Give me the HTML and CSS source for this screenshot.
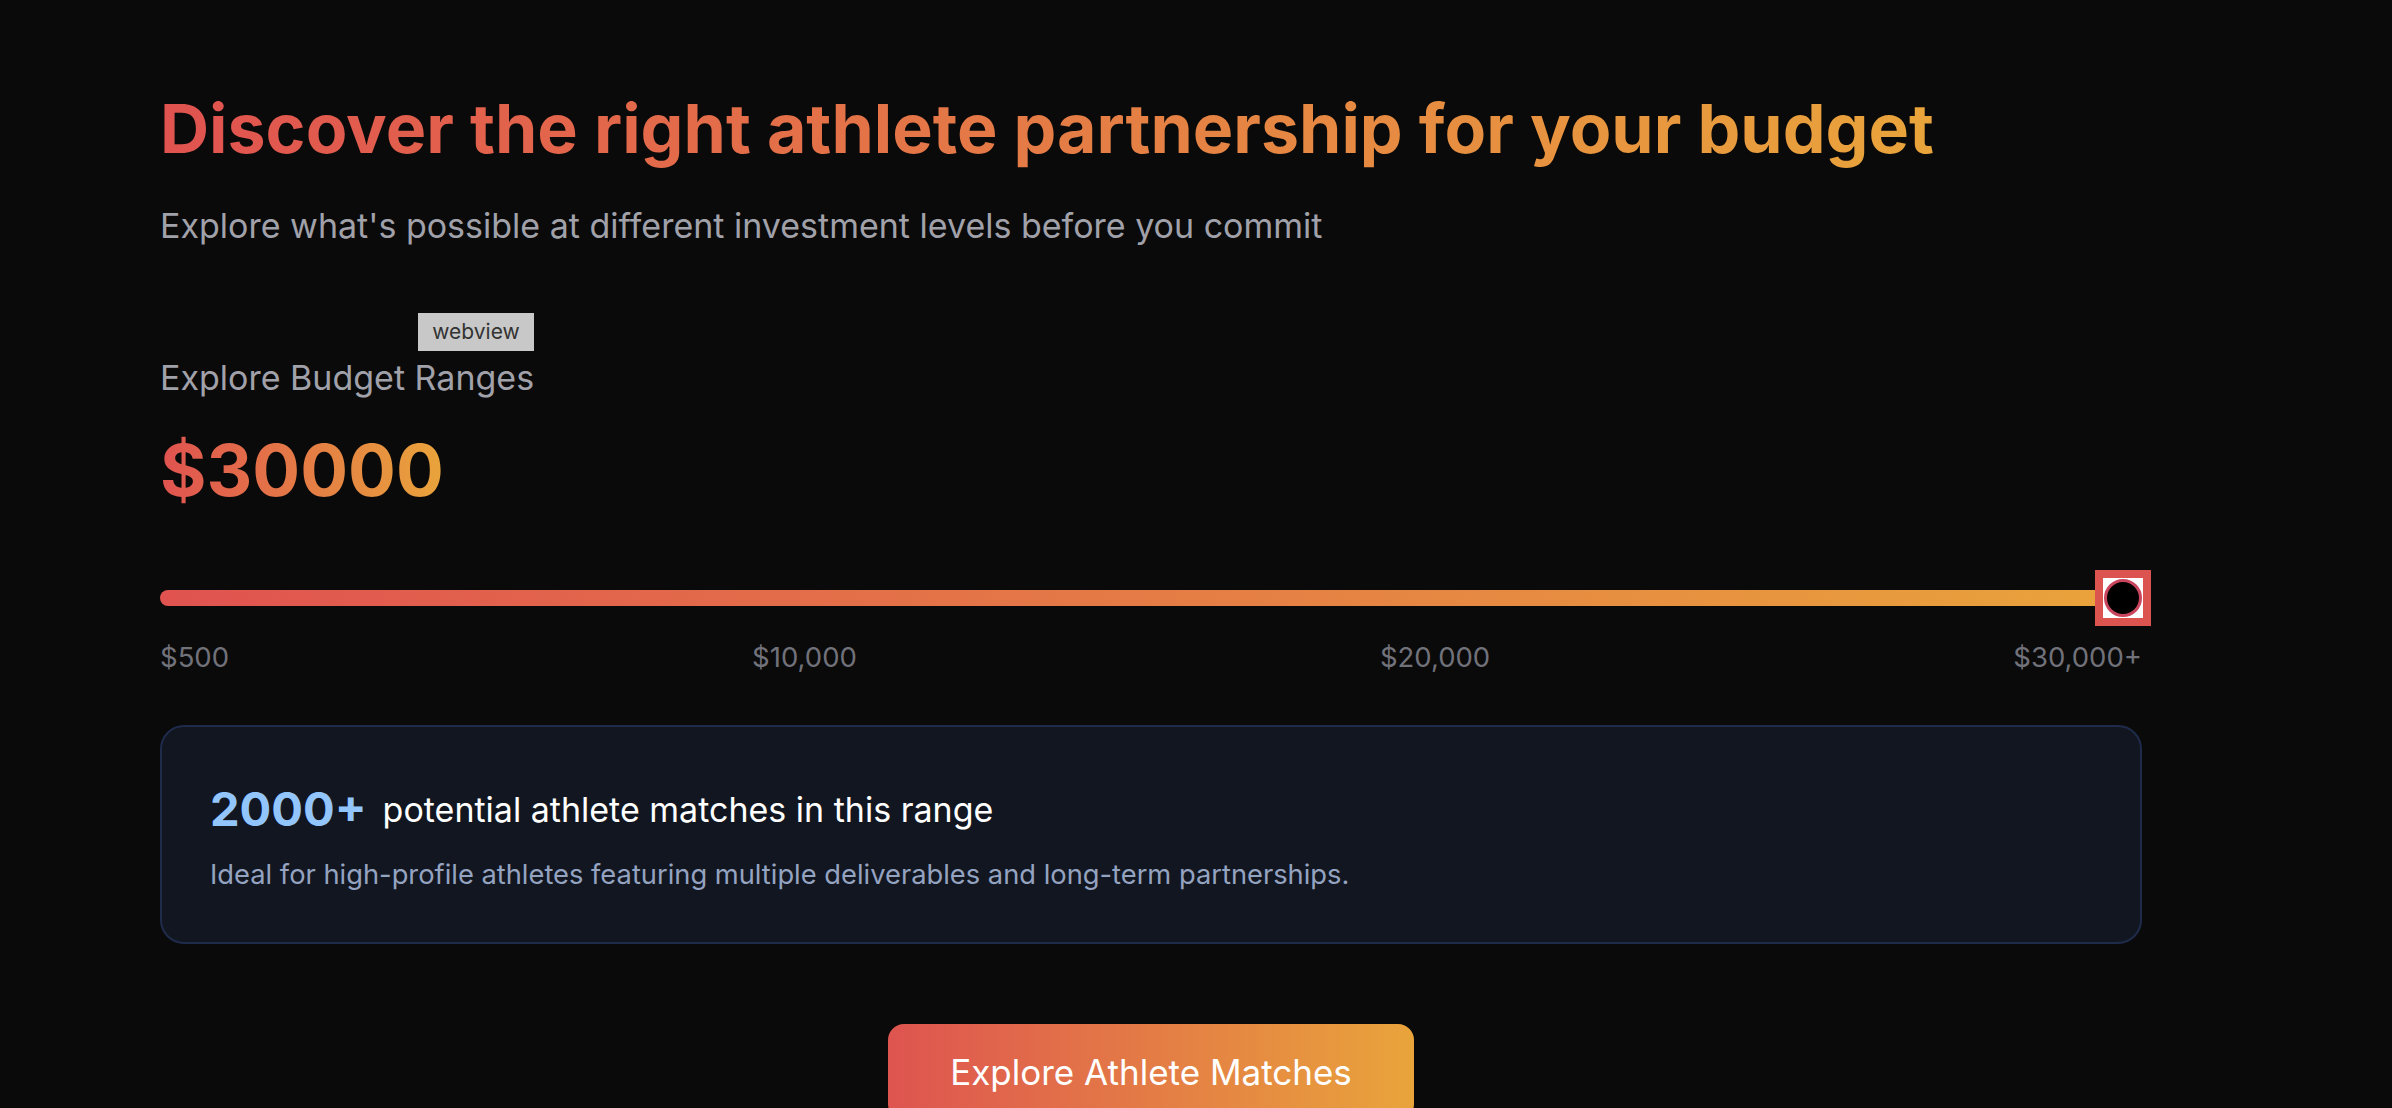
FILE: index.html
```html
<!DOCTYPE html>
<html lang="en">
<head>
<meta charset="utf-8">
<title>Budget Explorer</title>
<link rel="stylesheet" href="styles.css">
</head>
<body>
<main class="page">
  <h1 class="title"><span class="grad">Discover the right athlete partnership for your budget</span></h1>
  <p class="subtitle">Explore what's possible at different investment levels before you commit</p>

  <section class="budget">
    <div class="label-wrap">
      <span class="label">Explore Budget Ranges</span>
      <span class="badge">webview</span>
    </div>
    <div class="amount"><span class="grad">$30000</span></div>

    <div class="slider">
      <div class="track"></div>
      <div class="thumb"><div class="thumb-inner"><div class="knob"></div></div></div>
    </div>
    <div class="ticks">
      <span>$500</span>
      <span>$10,000</span>
      <span>$20,000</span>
      <span>$30,000+</span>
    </div>

    <div class="card">
      <div class="card-row">
        <span class="count">2000+</span>
        <span class="count-text">potential athlete matches in this range</span>
      </div>
      <p class="card-desc">Ideal for high-profile athletes featuring multiple deliverables and long-term partnerships.</p>
    </div>

    <div class="actions">
      <button class="cta">Explore Athlete Matches</button>
    </div>
  </section>
</main>
</body>
</html>
```

FILE: styles.css
```css
* { box-sizing: border-box; }

html, body {
  margin: 0;
  padding: 0;
  background: #0a0a0a;
  font-family: Inter, "Noto Sans", "Liberation Sans", sans-serif;
  overflow: hidden;
}

.page {
  width: 1982px;
  margin-left: 160px;
  padding-top: 88px;
}

.grad {
  display: inline-block;
  background: linear-gradient(90deg, #e05350 0%, #e9a43b 100%);
  -webkit-background-clip: text;
  background-clip: text;
  color: transparent;
}

.title {
  margin: 0;
  font-size: 68px;
  line-height: 1.2;
  font-weight: 700;
}

.subtitle {
  margin: 30px 0 0;
  font-size: 34px;
  line-height: 1.5;
  color: #a1a1aa;
  font-weight: 400;
}

.budget {
  margin-top: 101px;
}

.label-wrap {
  position: relative;
  display: inline-block;
}

.label {
  font-size: 34px;
  line-height: 1.5;
  color: #a1a1aa;
}

.badge {
  position: absolute;
  left: 258px;
  top: -39px;
  width: 116px;
  height: 38px;
  background: #c8c8c8;
  color: #333333;
  font-size: 21px;
  line-height: 38px;
  text-align: center;
}

.amount {
  margin-top: 25px;
  font-size: 71px;
  line-height: 1.2;
  font-weight: 700;
}

.slider {
  position: relative;
  margin-top: 57px;
  height: 56px;
  display: flex;
  align-items: center;
}

.track {
  width: 100%;
  height: 16px;
  border-radius: 8px;
  background: linear-gradient(90deg, #e05350 0%, #e9a43b 100%);
}

.thumb {
  position: absolute;
  right: -9px;
  top: 0;
  width: 56px;
  height: 56px;
  background: #dc5450;
  padding: 8px;
}

.thumb-inner {
  width: 40px;
  height: 40px;
  background: #ffffff;
  display: flex;
  align-items: center;
  justify-content: center;
}

.knob {
  width: 38px;
  height: 38px;
  border-radius: 50%;
  background: #000000;
  border: 3px solid #c9465e;
}

.ticks {
  margin-top: 11px;
  display: flex;
  justify-content: space-between;
  font-size: 27.5px;
  line-height: 1.5;
  color: #71717a;
}

.card {
  margin-top: 47px;
  height: 219px;
  border: 2px solid #1f2b4b;
  border-radius: 24px;
  background: #121620;
  padding: 54px 48px 40px;
}

.card-row {
  display: flex;
  align-items: center;
  gap: 16px;
}

.count {
  font-size: 47px;
  line-height: 1.2;
  font-weight: 700;
  color: #93c5fd;
}

.count-text {
  font-size: 34px;
  line-height: 1.5;
  color: #ffffff;
}

.card-desc {
  margin: 18px 0 0;
  font-size: 27.3px;
  line-height: 1.5;
  color: #94a3c0;
}

.actions {
  margin-top: 80px;
  display: flex;
  justify-content: center;
}

.cta {
  width: 526px;
  height: 96px;
  border: none;
  border-radius: 16px;
  background: linear-gradient(90deg, #de5450 0%, #e9a43b 100%);
  color: #ffffff;
  font-family: Inter, "Noto Sans", "Liberation Sans", sans-serif;
  font-size: 35px;
  font-weight: 400;
}
```
